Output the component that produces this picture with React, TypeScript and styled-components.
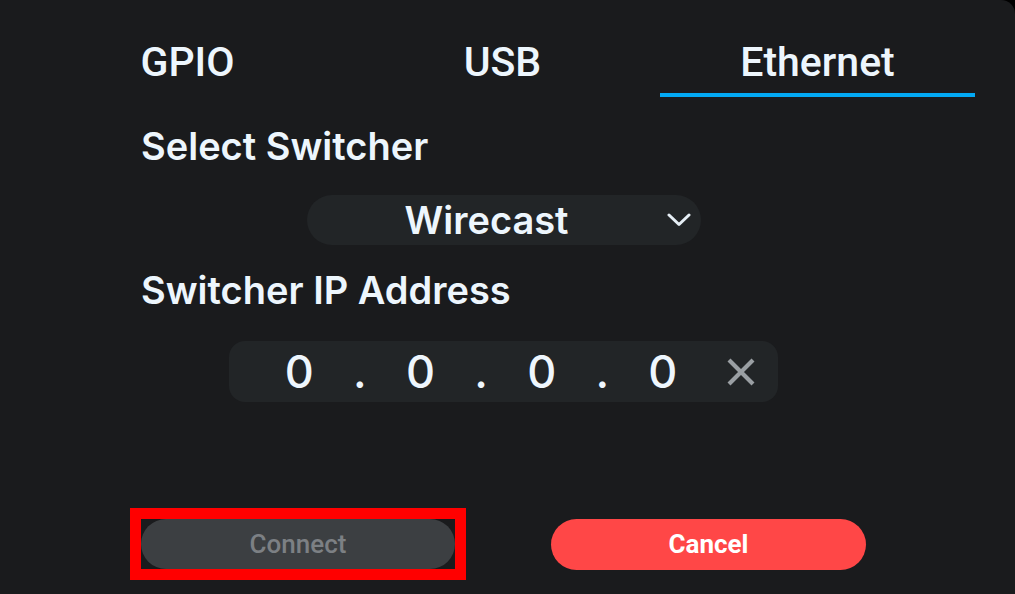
import React, { useState } from "react";
import styled, { createGlobalStyle } from "styled-components";

const Global = createGlobalStyle`
  html, body { margin: 0; padding: 0; background: #000; }
  * { box-sizing: border-box; }
`;

const Panel = styled.div`
  width: 1015px;
  height: 594px;
  background: #1a1b1d;
  border-top-right-radius: 14px;
  overflow: hidden;
`;

const Column = styled.div`
  margin-left: 30px;
  width: 947px;
  display: flex;
  flex-direction: column;
`;

const Tabs = styled.div`
  display: flex;
  margin-top: 43px;
`;

const Tab = styled.button<{ $active?: boolean }>`
  flex: 0 0 315px;
  background: none;
  border: none;
  padding: 0 0 11px;
  border-bottom: 4px solid ${(p) => (p.$active ? "#02a9f4" : "transparent")};
  font-family: Roboto, "Liberation Sans", sans-serif;
  font-weight: 500;
  font-size: 41px;
  line-height: 39px;
  color: #edf6fd;
  text-align: center;
  cursor: pointer;
`;

const Label = styled.div<{ $top: number }>`
  margin-top: ${(p) => p.$top}px;
  padding-left: 111px;
  font-family: Inter, "Noto Sans", sans-serif;
  font-weight: 600;
  font-size: 38px;
  line-height: 38px;
  color: #edf6fd;
`;

const Select = styled.div`
  align-self: center;
  margin-top: 30px;
  width: 394px;
  height: 50px;
  border-radius: 25px;
  background: #222527;
  display: flex;
  align-items: center;
  padding-right: 10px;
`;

const SelectValue = styled.div`
  flex: 1;
  text-align: center;
  font-family: Inter, "Noto Sans", sans-serif;
  font-weight: 600;
  font-size: 38px;
  line-height: 50px;
  color: #edf6fd;
`;

const IpBox = styled.div`
  align-self: center;
  margin-top: 32px;
  width: 549px;
  height: 61px;
  border-radius: 16px;
  background: #222527;
  display: flex;
  align-items: center;
  padding-left: 40px;
`;

const IpCell = styled.div`
  width: 60.6px;
  text-align: center;
  font-family: Inter, "Noto Sans", sans-serif;
  font-weight: 500;
  font-size: 45px;
  line-height: 61px;
  color: #eef6fd;
`;

const ClearButton = styled.button`
  margin-left: 33px;
  width: 30px;
  height: 30px;
  padding: 0;
  background: none;
  border: none;
  display: flex;
  align-items: center;
  justify-content: center;
  cursor: pointer;
`;

const Actions = styled.div`
  margin-top: 106px;
  padding-left: 100px;
  display: flex;
  align-items: center;
  gap: 85px;
`;

const Highlight = styled.div`
  border: 11px solid #ff0000;
  display: flex;
`;

const Button = styled.button<{ $variant: "disabled" | "danger" }>`
  width: ${(p) => (p.$variant === "danger" ? 315 : 314)}px;
  height: ${(p) => (p.$variant === "danger" ? 51 : 50)}px;
  border: none;
  border-radius: 26px;
  background: ${(p) => (p.$variant === "danger" ? "#ff4747" : "#3c3f42")};
  color: ${(p) => (p.$variant === "danger" ? "#ffffff" : "#7c8084")};
  font-family: Roboto, "Liberation Sans", sans-serif;
  font-weight: ${(p) => (p.$variant === "danger" ? 700 : 500)};
  font-size: 26px;
  padding: 0;
  cursor: pointer;
`;

const Chevron = () => (
  <svg width="24" height="14" viewBox="0 0 24 14" fill="none">
    <polyline points="2,2 12,11.5 22,2" stroke="#e6eef5" strokeWidth="3" strokeLinecap="round" strokeLinejoin="round" />
  </svg>
);

const Cross = () => (
  <svg width="30" height="30" viewBox="0 0 30 30" fill="none">
    <path d="M3 3 L27 27 M27 3 L3 27" stroke="#9a9fa3" strokeWidth="4.2" strokeLinecap="butt" />
  </svg>
);

export default function App() {
  const [tab, setTab] = useState("Ethernet");
  const ip = ["0", ".", "0", ".", "0", ".", "0"];
  return (
    <>
      <Global />
      <Panel>
        <Column>
          <Tabs>
            {["GPIO", "USB", "Ethernet"].map((t) => (
              <Tab key={t} $active={tab === t} onClick={() => setTab(t)}>
                {t}
              </Tab>
            ))}
          </Tabs>
          <Label $top={30}>Select Switcher</Label>
          <Select>
            <SelectValue>Wirecast</SelectValue>
            <Chevron />
          </Select>
          <Label $top={26}>Switcher IP Address</Label>
          <IpBox>
            {ip.map((c, i) => (
              <IpCell key={i}>{c}</IpCell>
            ))}
            <ClearButton>
              <Cross />
            </ClearButton>
          </IpBox>
          <Actions>
            <Highlight>
              <Button $variant="disabled">Connect</Button>
            </Highlight>
            <Button $variant="danger">Cancel</Button>
          </Actions>
        </Column>
      </Panel>
    </>
  );
}
